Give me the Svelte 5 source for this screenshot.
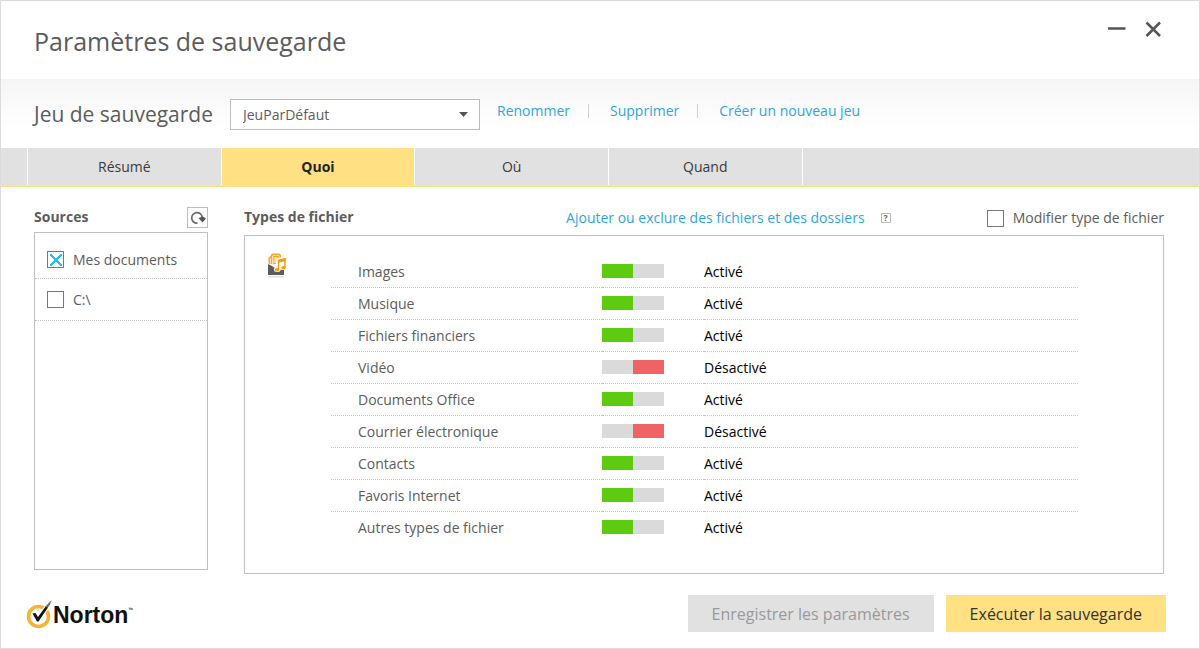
<script>
  let sets = ['JeuParDéfaut'];
  let current = $state('JeuParDéfaut');

  const tabs = ['Résumé', 'Quoi', 'Où', 'Quand'];
  let activeTab = $state('Quoi');

  let sources = $state([
    { id: 'docs', label: 'Mes documents', checked: true },
    { id: 'c', label: 'C:\\', checked: false }
  ]);

  let types = $state([
    { id: 'images', label: 'Images', on: true },
    { id: 'musique', label: 'Musique', on: true },
    { id: 'finance', label: 'Fichiers financiers', on: true },
    { id: 'video', label: 'Vidéo', on: false },
    { id: 'office', label: 'Documents Office', on: true },
    { id: 'courrier', label: 'Courrier électronique', on: false },
    { id: 'contacts', label: 'Contacts', on: true },
    { id: 'favoris', label: 'Favoris Internet', on: true },
    { id: 'autres', label: 'Autres types de fichier', on: true }
  ]);

  let modify = $state(false);
</script>

<div class="window">
  <header class="titlebar">
    <h1>Paramètres de sauvegarde</h1>
    <div class="controls">
      <button type="button" aria-label="Réduire">
        <svg width="18" height="18" viewBox="0 0 18 18"><path d="M0 8.500H17.500" /></svg>
      </button>
      <button type="button" aria-label="Fermer">
        <svg width="18" height="18" viewBox="0 0 18 18"><path d="M1.500 2.500L15 16M15 2.500L1.500 16" /></svg>
      </button>
    </div>
  </header>

  <section class="setbar">
    <label for="set">Jeu de sauvegarde</label>
    <div class="select">
      <select id="set" bind:value={current}>
        {#each sets as s}<option>{s}</option>{/each}
      </select>
      <svg width="9" height="5" viewBox="0 0 9 5"><path d="M0 0H9L4.500 5Z" fill="#555" /></svg>
    </div>
    <nav class="actions">
      <a href="#renommer">Renommer</a>
      <a href="#supprimer">Supprimer</a>
      <a href="#creer">Créer un nouveau jeu</a>
    </nav>
  </section>

  <div class="tabs">
    <span class="filler"></span>
    {#each tabs as tab}
      <button type="button" class:active={tab === activeTab} onclick={() => (activeTab = tab)}>{tab}</button>
    {/each}
    <span class="filler"></span>
  </div>

  <main>
    <section class="sources">
      <div class="head">
        <h2>Sources</h2>
        <button type="button" class="refresh" aria-label="Actualiser">
          <svg width="19" height="19" viewBox="0 0 19 19">
            <path d="M9.500 15.200A5.300 5.300 0 1 1 14.300 9.500" fill="none" stroke="#6a6a6a" stroke-width="1.700" />
            <path d="M10.500 10L14.500 14.500L18 10.500L14.800 8.500Z" fill="#555" />
          </svg>
        </button>
      </div>
      <ul class="panel">
        {#each sources as s (s.id)}
          <li>
            <input class="box" type="checkbox" id={s.id} bind:checked={s.checked} />
            <label for={s.id}>{s.label}</label>
          </li>
        {/each}
      </ul>
    </section>

    <section class="types">
      <div class="head">
        <h2>Types de fichier</h2>
        <div class="links">
          <a href="#ajouter">Ajouter ou exclure des fichiers et des dossiers</a>
          <button type="button" class="help" aria-label="Aide">?</button>
        </div>
        <div class="modify">
          <input class="box" type="checkbox" id="modify" bind:checked={modify} />
          <label for="modify">Modifier type de fichier</label>
        </div>
      </div>
      <div class="panel list">
        <svg width="20" height="26" viewBox="0 0 20 26">
          <path d="M0.500 11V4.500L3 2.500V1.500L4 0.500H11.500L13 2V11Z" fill="#f9a81f" />
          <path d="M2.500 5V12M4.500 3V12H12V4.500L11 2.500H4.500" fill="none" stroke="#fff2d6" stroke-width="0.800" />
          <path d="M5.500 5H10M5.500 7H10M5.500 9H8.500" stroke="#fff" />
          <path d="M0 11L3 12.500L7 15L16 17V22H0Z" fill="#5c5c5c" />
          <path d="M10.300 16V7.500L16.800 6V14M8.500 16.500H10M15 14.500H16.500" fill="none" stroke="#fff" stroke-width="5" stroke-linejoin="round" stroke-linecap="round" />
          <path d="M10.500 16.500V7.500L17 6V14.500" fill="none" stroke="#f59c0c" stroke-width="1.400" />
          <path d="M10 6.800L17.700 5V8L10 9.800Z" fill="#f59c0c" />
          <ellipse cx="9" cy="16.700" rx="2.200" ry="1.800" fill="#f59c0c" />
          <ellipse cx="15.500" cy="14.800" rx="2.200" ry="1.800" fill="#f59c0c" />
          <path d="M0 23.500H16" stroke="#e0e0e0" />
          <path d="M0 24.500H16" stroke="#f0f0f0" />
        </svg>
        <table>
          <tbody>
            {#each types as t (t.id)}
              <tr>
                <th scope="row"><label for={t.id}>{t.label}</label></th>
                <td class="toggle"><input type="checkbox" role="switch" id={t.id} bind:checked={t.on} /></td>
                <td class="state">{t.on ? 'Activé' : 'Désactivé'}</td>
              </tr>
            {/each}
          </tbody>
        </table>
      </div>
    </section>
  </main>

  <footer>
    <div class="brand">
      <svg width="28" height="30" viewBox="0 0 28 30">
        <circle cx="13.500" cy="17.500" r="10" fill="none" stroke="#f6b335" stroke-width="3.600" />
        <path d="M17.500 10L22 3L25 9L20 14Z" fill="#fff" />
        <path d="M7.500 14.500L10.500 14L13 18L21 7L23 8.500L13.500 22.500H12Z" fill="#111" />
        <path d="M20.500 7.500L26.500 1L25 5.500L22.500 9Z" fill="#6b675c" />
      </svg>
      <span>Norton</span><sup>™</sup>
    </div>
    <div class="buttons">
      <button type="button" class="save" disabled>Enregistrer les paramètres</button>
      <button type="button" class="run">Exécuter la sauvegarde</button>
    </div>
  </footer>
</div>

<style>
  :global(body) {
    background: #fff;
    font-family: 'Open Sans', 'Noto Sans', sans-serif;
    font-size: 14px;
    line-height: 20px;
    color: #5c5c5c;
  }
  .window {
    box-sizing: border-box;
    min-height: 100vh;
    display: flex;
    flex-direction: column;
    border: 1px solid #dcdcdc;
  }
  button, select { font: inherit; color: inherit; cursor: pointer; border: 0; padding: 0; margin: 0; background: none; border-radius: 0; }
  h1, h2, ul { margin: 0; padding: 0; }
  h1 { font-size: 25px; line-height: 36px; font-weight: 400; }
  h2 { font-size: 14px; line-height: 20px; font-weight: 700; }
  a { color: #2fa5de; text-decoration: none; }
  svg { display: block; flex: none; }

  .titlebar { display: flex; justify-content: space-between; padding: 22px 36px 20px 33px; }
  .controls { display: flex; gap: 19px; align-items: flex-start; margin-top: -3px; }
  .controls path { stroke: #555; stroke-width: 2.5; fill: none; }

  .setbar { display: flex; align-items: center; gap: 17px; padding: 19px 33px 18px; background: linear-gradient(#f5f5f5, #fff 70%); }
  .setbar > label { font-size: 21px; line-height: 32px; }
  .select { position: relative; width: 250px; }
  .select select { appearance: none; box-sizing: border-box; width: 100%; height: 31px; padding: 1px 12px 0; border: 1px solid #bdbdbd; background: #fff; display: block; }
  .select svg { position: absolute; right: 12px; top: 13px; pointer-events: none; }
  .actions { display: flex; align-self: flex-start; margin-top: 3px; }
  .actions a + a { margin-left: 18px; padding-left: 22px; background: linear-gradient(#d0d0d0, #d0d0d0) 0 3px / 1px 14px no-repeat; }

  .tabs { display: grid; grid-template-columns: 26px repeat(4, 35fr) 72fr; gap: 1px; border-bottom: 2px solid #ffe082; }
  .tabs > * { background: #e1e1e1; height: 37px; padding-top: 1px; box-sizing: border-box; color: #3a3a3a; }
  .tabs .active { background: #ffe082; color: #222; font-weight: 700; }

  main { flex: 1; display: grid; grid-template-columns: 174px 1fr; gap: 36px; padding: 20px 35px 21px 33px; }
  section.sources, section.types { display: flex; flex-direction: column; }
  .sources { margin-bottom: 4px; }
  .head { display: flex; align-items: flex-start; justify-content: space-between; }
  .sources .head { height: 25px; }
  .types .head { height: 28px; }
  .refresh { border: 1px solid #bdbdbd; }
  .panel { flex: 1; border: 1px solid #c0c0c0; list-style: none; }

  .sources li { display: flex; align-items: center; gap: 9px; height: 41px; padding: 0 12px; border-bottom: 1px dotted #c4c4c4; }
  .sources li:first-child { height: 37px; padding-top: 8px; }
  .box { appearance: none; box-sizing: border-box; width: 17px; height: 17px; margin: 0; border: 1px solid #777; background: #fff; flex: none; }
  .box:checked {
    background:
      linear-gradient(45deg, transparent 44%, #22c0f4 44% 56%, transparent 56%) center / 12px 12px no-repeat,
      linear-gradient(-45deg, transparent 44%, #22c0f4 44% 56%, transparent 56%) center / 12px 12px no-repeat;
  }
  .links { display: flex; align-items: center; gap: 16px; margin-left: auto; margin-right: 96px; }
  .links, .modify { margin-top: 1px; }
  .help { box-sizing: border-box; width: 10px; height: 10px; border: 1px solid #bbb; font-size: 8px; line-height: 8px; font-weight: 700; }
  .modify { display: flex; align-items: center; gap: 9px; }

  .list { display: flex; align-items: flex-start; padding: 17px 85px 25px 23px; }
  .list table { flex: 1; margin: 2px 0 0 43px; border-collapse: collapse; table-layout: fixed; width: 100%; }
  tr { height: 32px; }
  th, td { padding: 2px 0 0; text-align: left; font-weight: 400; border-bottom: 1px dotted #c4c4c4; }
  tr:last-child > * { border-bottom: 0; }
  th { width: 244px; padding-left: 27px; }
  .toggle { width: 102px; padding: 0; }
  .toggle input { appearance: none; display: block; width: 62px; height: 14px; margin: 0; background: linear-gradient(90deg, #dadada 50%, #ee6464 50%); }
  .toggle input:checked { background: linear-gradient(90deg, #5dcc10 50%, #dadada 50%); }
  .state { color: #000; }

  footer { display: flex; align-items: center; justify-content: space-between; padding: 0 33px 16px 24px; }
  .brand { display: flex; align-items: center; color: #111; }
  .brand span { font: 700 23px/30px 'Liberation Sans', sans-serif; padding-top: 2px; }
  .brand sup { font-size: 6px; line-height: 6px; align-self: flex-start; margin-top: 9px; }
  .buttons { display: flex; gap: 12px; }
  .buttons button { height: 37px; padding: 1px 24px 0; font-size: 16px; }
  .save { background: #e1e1e1; color: #999; }
  .run { background: #ffe082; color: #333; }
</style>
